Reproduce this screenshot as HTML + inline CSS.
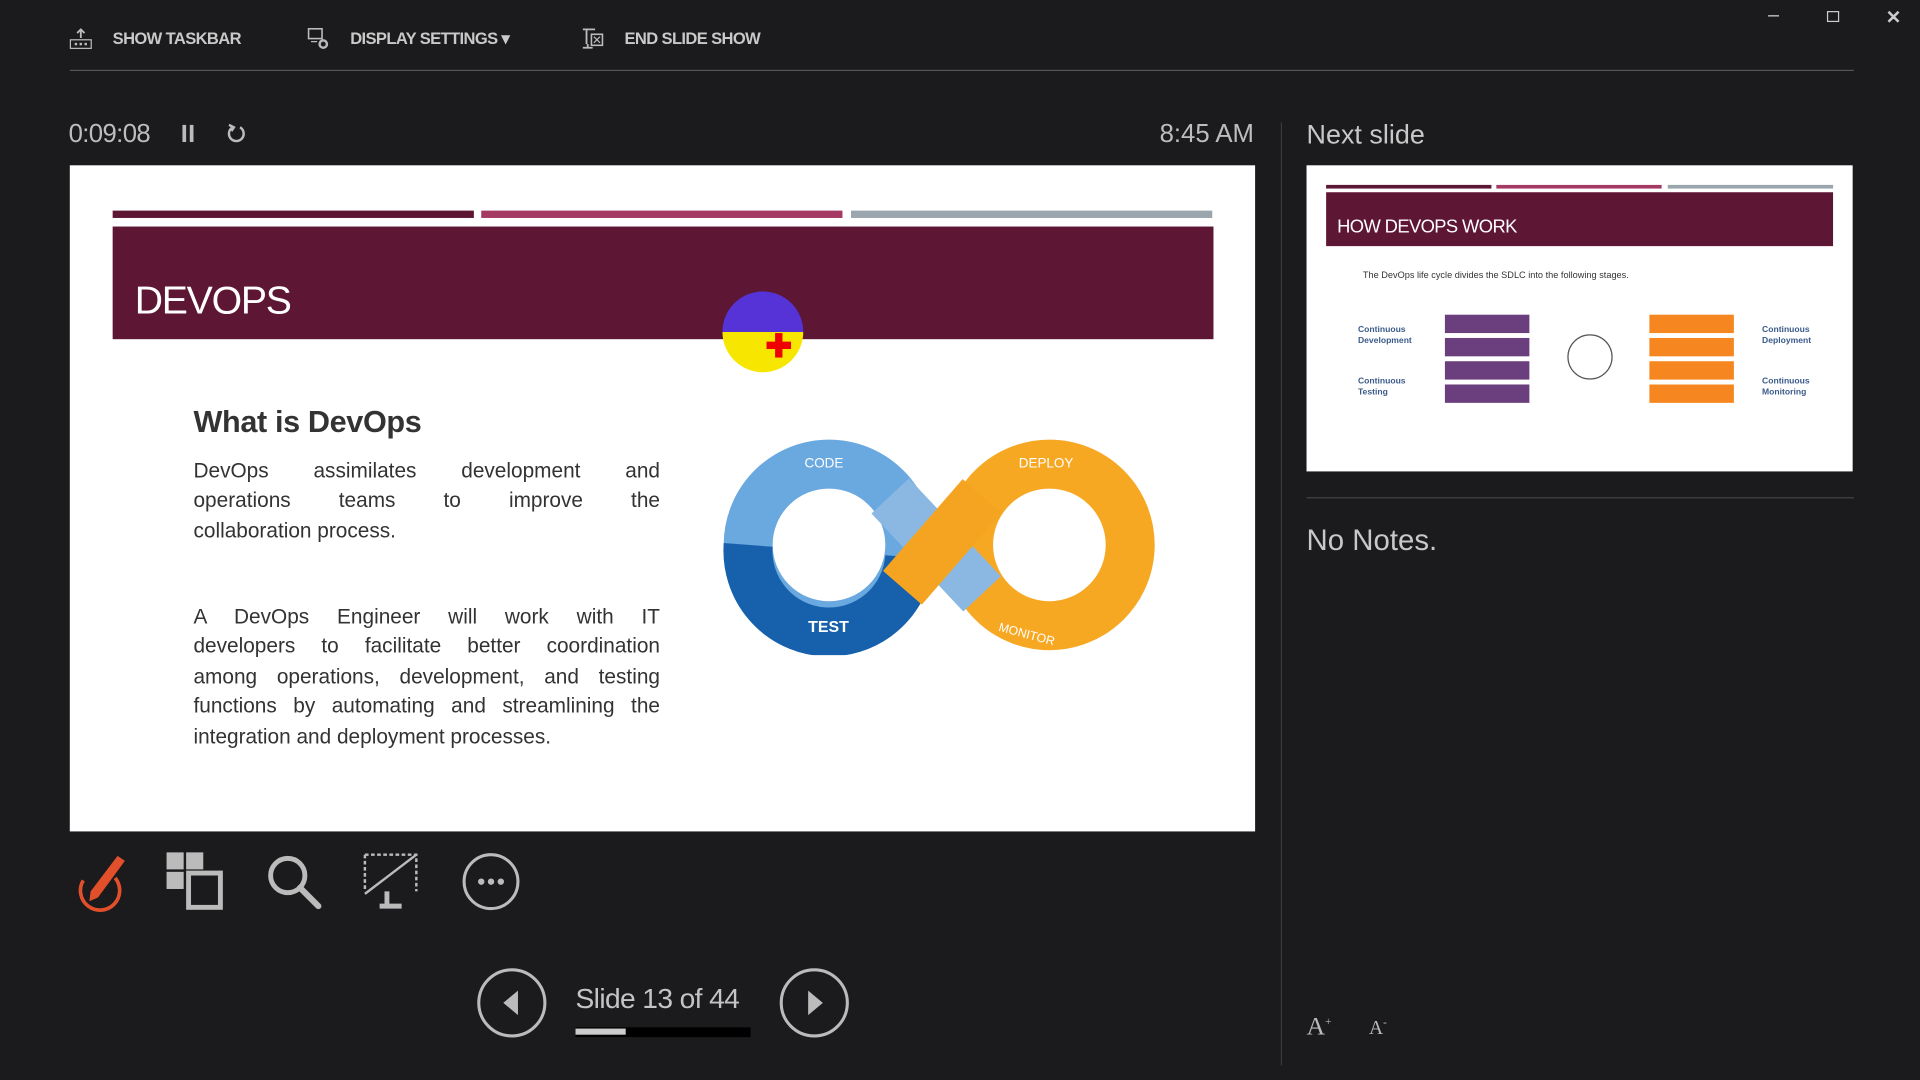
<!DOCTYPE html>
<html><head><meta charset="utf-8"><style>
html,body{margin:0;padding:0;background:#1b1a1c;overflow:hidden;width:1920px;height:1080px}
#w{position:absolute;left:0;top:0;width:1568px;height:882px;transform:scale(1.22449);transform-origin:0 0;font-family:"Liberation Sans",sans-serif;color:#c8c8c8}
.a{position:absolute}
.tb{font-size:13.5px;font-weight:bold;color:#c9c9c9;letter-spacing:-0.5px}
.p{position:absolute;left:101px;width:381px;font-size:17px;line-height:24.4px;color:#333}
.p span{display:block;text-align:justify;text-align-last:justify;white-space:nowrap}
.p span.l{text-align-last:left}
</style></head><body><div id="w">
<svg class="a" style="left:56px;top:23px" width="20" height="18" viewBox="0 0 20 18"><path d="M10 1v7M7 4l3-3 3 3" stroke="#bbb" fill="none" stroke-width="1.5"/><rect x="1.5" y="9.5" width="17" height="7" fill="none" stroke="#bbb"/><rect x="5" y="12" width="2" height="2" fill="#bbb"/><rect x="9" y="12" width="2" height="2" fill="#bbb"/><rect x="13" y="12" width="2" height="2" fill="#bbb"/></svg>
<div class="a tb" style="left:92px;top:24px">SHOW TASKBAR</div>
<svg class="a" style="left:250px;top:22px" width="20" height="20" viewBox="0 0 20 20"><rect x="2" y="1.5" width="11" height="8" fill="none" stroke="#bbb" stroke-width="1.3"/><path d="M4 12h5" stroke="#bbb"/><circle cx="14" cy="14" r="3" fill="none" stroke="#bbb" stroke-width="2"/></svg>
<div class="a tb" style="left:286px;top:24px">DISPLAY SETTINGS ▾</div>
<svg class="a" style="left:474px;top:22px" width="20" height="20" viewBox="0 0 20 20"><path d="M2 2h10M5 2v12M2 17h8M6 14v3" stroke="#bbb" stroke-width="1.5" fill="none"/><rect x="9" y="6" width="9" height="9" fill="none" stroke="#bbb" stroke-width="1.3"/><path d="M11 8l5 5M16 8l-5 5" stroke="#bbb"/></svg>
<div class="a tb" style="left:510px;top:24px">END SLIDE SHOW</div>
<div class="a" style="left:57px;top:57px;width:1457px;height:1px;background:#555"></div>
<div class="a" style="left:1444px;top:4px;color:#ccc;font-size:16px">–</div>
<div class="a" style="left:1492px;top:9px;width:8px;height:7px;border:1.5px solid #ccc"></div>
<div class="a" style="left:1540px;top:5px;color:#ccc;font-size:15px;font-weight:bold">✕</div>
<div class="a" style="left:56px;top:98px;font-size:21px;color:#bdbdbd;letter-spacing:-0.5px">0:09:08</div>
<div class="a" style="left:149px;top:102px;width:3px;height:14px;background:#bbb"></div>
<div class="a" style="left:155px;top:102px;width:3px;height:14px;background:#bbb"></div>
<svg class="a" style="left:184px;top:100px" width="18" height="18" viewBox="0 0 18 18"><path d="M12 4A6 6 0 1 1 6 4" stroke="#bbb" stroke-width="2" fill="none"/><path d="M3 2l4 2-2 3" stroke="#bbb" stroke-width="2" fill="none"/></svg>
<div class="a" style="left:947px;top:98px;font-size:21px;color:#bdbdbd">8:45 AM</div>
<div class="a" style="left:1046px;top:100px;width:1px;height:770px;background:#3a3a3a"></div>
<div class="a" style="left:1067px;top:97px;font-size:22px;color:#c8c8c8">Next slide</div>
<div class="a" style="left:57px;top:135px;width:968px;height:544px;background:#fff;overflow:hidden">
 <div class="a" style="left:35px;top:37px;width:295px;height:6px;background:#5e1635"></div>
 <div class="a" style="left:336px;top:37px;width:295px;height:6px;background:#a43a63"></div>
 <div class="a" style="left:638px;top:37px;width:295px;height:6px;background:#9aa5ad"></div>
 <div class="a" style="left:35px;top:50px;width:899px;height:92px;background:#5e1635"></div>
 <div class="a" style="left:53px;top:92px;font-size:32px;color:#fff;letter-spacing:-1px">DEVOPS</div>
 <div class="a" style="left:533px;top:103px;width:66px;height:66px;border-radius:50%;background:linear-gradient(#5533d6 0 50%,#f7e600 50%)"></div>
 <div class="a" style="left:576px;top:137px;width:6px;height:20px;background:#e00"></div>
 <div class="a" style="left:569px;top:144px;width:20px;height:6px;background:#e00"></div>
 <div class="a" style="left:101px;top:196px;font-size:25px;font-weight:bold;color:#333;letter-spacing:-0.3px">What is DevOps</div>
 <div class="p" style="top:238px"><span>DevOps assimilates development and</span><span>operations teams to improve the</span><span class="l">collaboration process.</span></div>
 <div class="p" style="top:357px"><span>A DevOps Engineer will work with IT</span><span>developers to facilitate better coordination</span><span>among operations, development, and testing</span><span>functions by automating and streamlining the</span><span class="l">integration and deployment processes.</span></div>
 <svg class="a" style="left:530px;top:220px" width="360" height="180" viewBox="0 0 360 180">
  <circle cx="90" cy="90" r="66" fill="none" stroke="#6aa8e0" stroke-width="40"/>
  <path d="M24 90A66 66 0 0 0 156 100" fill="none" stroke="#1761ac" stroke-width="40"/>
  <circle cx="270" cy="90" r="66" fill="none" stroke="#f7a823" stroke-width="40"/>
  <path d="M140 50L215 130" stroke="#8ab8e3" stroke-width="42"/>
  <path d="M150 125L215 50" stroke="#f5a421" stroke-width="42"/>
  <text x="70" y="27" font-size="11" fill="#fff" font-family="Liberation Sans">CODE</text>
  <text x="245" y="27" font-size="11" fill="#fff" font-family="Liberation Sans">DEPLOY</text>
  <text x="73" y="161" font-size="13" font-weight="bold" fill="#fff" font-family="Liberation Sans">TEST</text>
  <text x="228" y="160" font-size="10" fill="#fff" font-family="Liberation Sans" transform="rotate(15 228 160)">MONITOR</text>
 </svg>
</div>
<div class="a" style="left:1067px;top:135px;width:446px;height:250px;background:#fff;overflow:hidden">
 <div class="a" style="left:16px;top:16px;width:135px;height:3px;background:#5e1635"></div>
 <div class="a" style="left:155px;top:16px;width:135px;height:3px;background:#a43a63"></div>
 <div class="a" style="left:295px;top:16px;width:135px;height:3px;background:#9aa5ad"></div>
 <div class="a" style="left:16px;top:22px;width:414px;height:44px;background:#5e1635"></div>
 <div class="a" style="left:25px;top:42px;font-size:15px;color:#fff;letter-spacing:-0.5px">HOW DEVOPS WORK</div>
 <div class="a" style="left:46px;top:85px;font-size:7.5px;color:#333">The DevOps life cycle divides the SDLC into the following stages.</div>
 <div class="a" style="left:113px;top:122px;width:69px;height:72px;display:flex;flex-direction:column;gap:4px">
  <div style="height:15px;background:#6b3f7d"></div><div style="height:15px;background:#6b3f7d"></div><div style="height:15px;background:#6b3f7d"></div><div style="height:15px;background:#6b3f7d"></div></div>
 <div class="a" style="left:280px;top:122px;width:69px;height:72px;display:flex;flex-direction:column;gap:4px">
  <div style="height:15px;background:#f6861f"></div><div style="height:15px;background:#f6861f"></div><div style="height:15px;background:#f6861f"></div><div style="height:15px;background:#f6861f"></div></div>
 <div class="a" style="left:213px;top:138px;width:35px;height:35px;border:1.5px solid #555;border-radius:50%"></div>
 <div class="a" style="left:42px;top:130px;font-size:7px;font-weight:bold;color:#3a5a8a;line-height:9px">Continuous<br>Development</div>
 <div class="a" style="left:42px;top:172px;font-size:7px;font-weight:bold;color:#3a5a8a;line-height:9px">Continuous<br>Testing</div>
 <div class="a" style="left:372px;top:130px;font-size:7px;font-weight:bold;color:#3a5a8a;line-height:9px">Continuous<br>Deployment</div>
 <div class="a" style="left:372px;top:172px;font-size:7px;font-weight:bold;color:#3a5a8a;line-height:9px">Continuous<br>Monitoring</div>
</div>
<div class="a" style="left:1067px;top:406px;width:447px;height:1px;background:#444"></div>
<div class="a" style="left:1067px;top:428px;font-size:24px;color:#c8c8c8">No Notes.</div>
<svg class="a" style="left:56px;top:695px" width="48" height="50" viewBox="0 0 48 50"><path d="M12 24A16 16 0 1 0 38 22" stroke="#e2502b" stroke-width="3" fill="none"/><path d="M40 4l6 4-22 30-7 3 1-8z" fill="#e2502b"/></svg>
<svg class="a" style="left:136px;top:696px" width="48" height="48" viewBox="0 0 48 48"><rect x="0" y="0" width="14" height="14" fill="#bbb"/><rect x="16" y="0" width="14" height="14" fill="#bbb"/><rect x="0" y="16" width="14" height="14" fill="#bbb"/><rect x="18" y="17" width="26" height="28" fill="#1b1a1c" stroke="#bbb" stroke-width="4"/></svg>
<svg class="a" style="left:217px;top:697px" width="48" height="48" viewBox="0 0 48 48"><circle cx="18" cy="18" r="14" stroke="#bbb" stroke-width="4" fill="none"/><path d="M28 28l15 15" stroke="#bbb" stroke-width="5" stroke-linecap="round"/></svg>
<svg class="a" style="left:296px;top:696px" width="48" height="48" viewBox="0 0 48 48"><path d="M2 2h42v30M2 2v30" stroke="#bbb" stroke-width="2" stroke-dasharray="3 2" fill="none"/><path d="M2 34L44 2" stroke="#bbb" stroke-width="2"/><path d="M20 32v10M14 44h18" stroke="#bbb" stroke-width="4"/></svg>
<svg class="a" style="left:376px;top:696px" width="50" height="50" viewBox="0 0 50 50"><circle cx="25" cy="24" r="22" stroke="#bbb" stroke-width="2.5" fill="none"/><circle cx="17" cy="24" r="2.6" fill="#bbb"/><circle cx="25" cy="24" r="2.6" fill="#bbb"/><circle cx="33" cy="24" r="2.6" fill="#bbb"/></svg>
<svg class="a" style="left:389px;top:790px" width="58" height="58" viewBox="0 0 58 58"><circle cx="29" cy="29" r="27" stroke="#bbb" stroke-width="2.5" fill="none"/><path d="M34 19v20l-12-10z" fill="#bbb"/></svg>
<div class="a" style="left:470px;top:802px;font-size:23px;color:#c4c4c4;letter-spacing:-0.5px">Slide 13 of 44</div>
<div class="a" style="left:470px;top:839px;width:143px;height:8px;background:#000"></div>
<div class="a" style="left:470px;top:840px;width:41px;height:5px;background:#ccc"></div>
<svg class="a" style="left:636px;top:790px" width="58" height="58" viewBox="0 0 58 58"><circle cx="29" cy="29" r="27" stroke="#bbb" stroke-width="2.5" fill="none"/><path d="M24 19v20l12-10z" fill="#bbb"/></svg>
<div class="a" style="left:1067px;top:826px;font-size:21px;color:#bbb;font-family:'Liberation Serif',serif">A<sup style="font-size:9px">+</sup></div>
<div class="a" style="left:1118px;top:830px;font-size:16px;color:#bbb;font-family:'Liberation Serif',serif">A<sup style="font-size:9px">-</sup></div>
</div></body></html>
